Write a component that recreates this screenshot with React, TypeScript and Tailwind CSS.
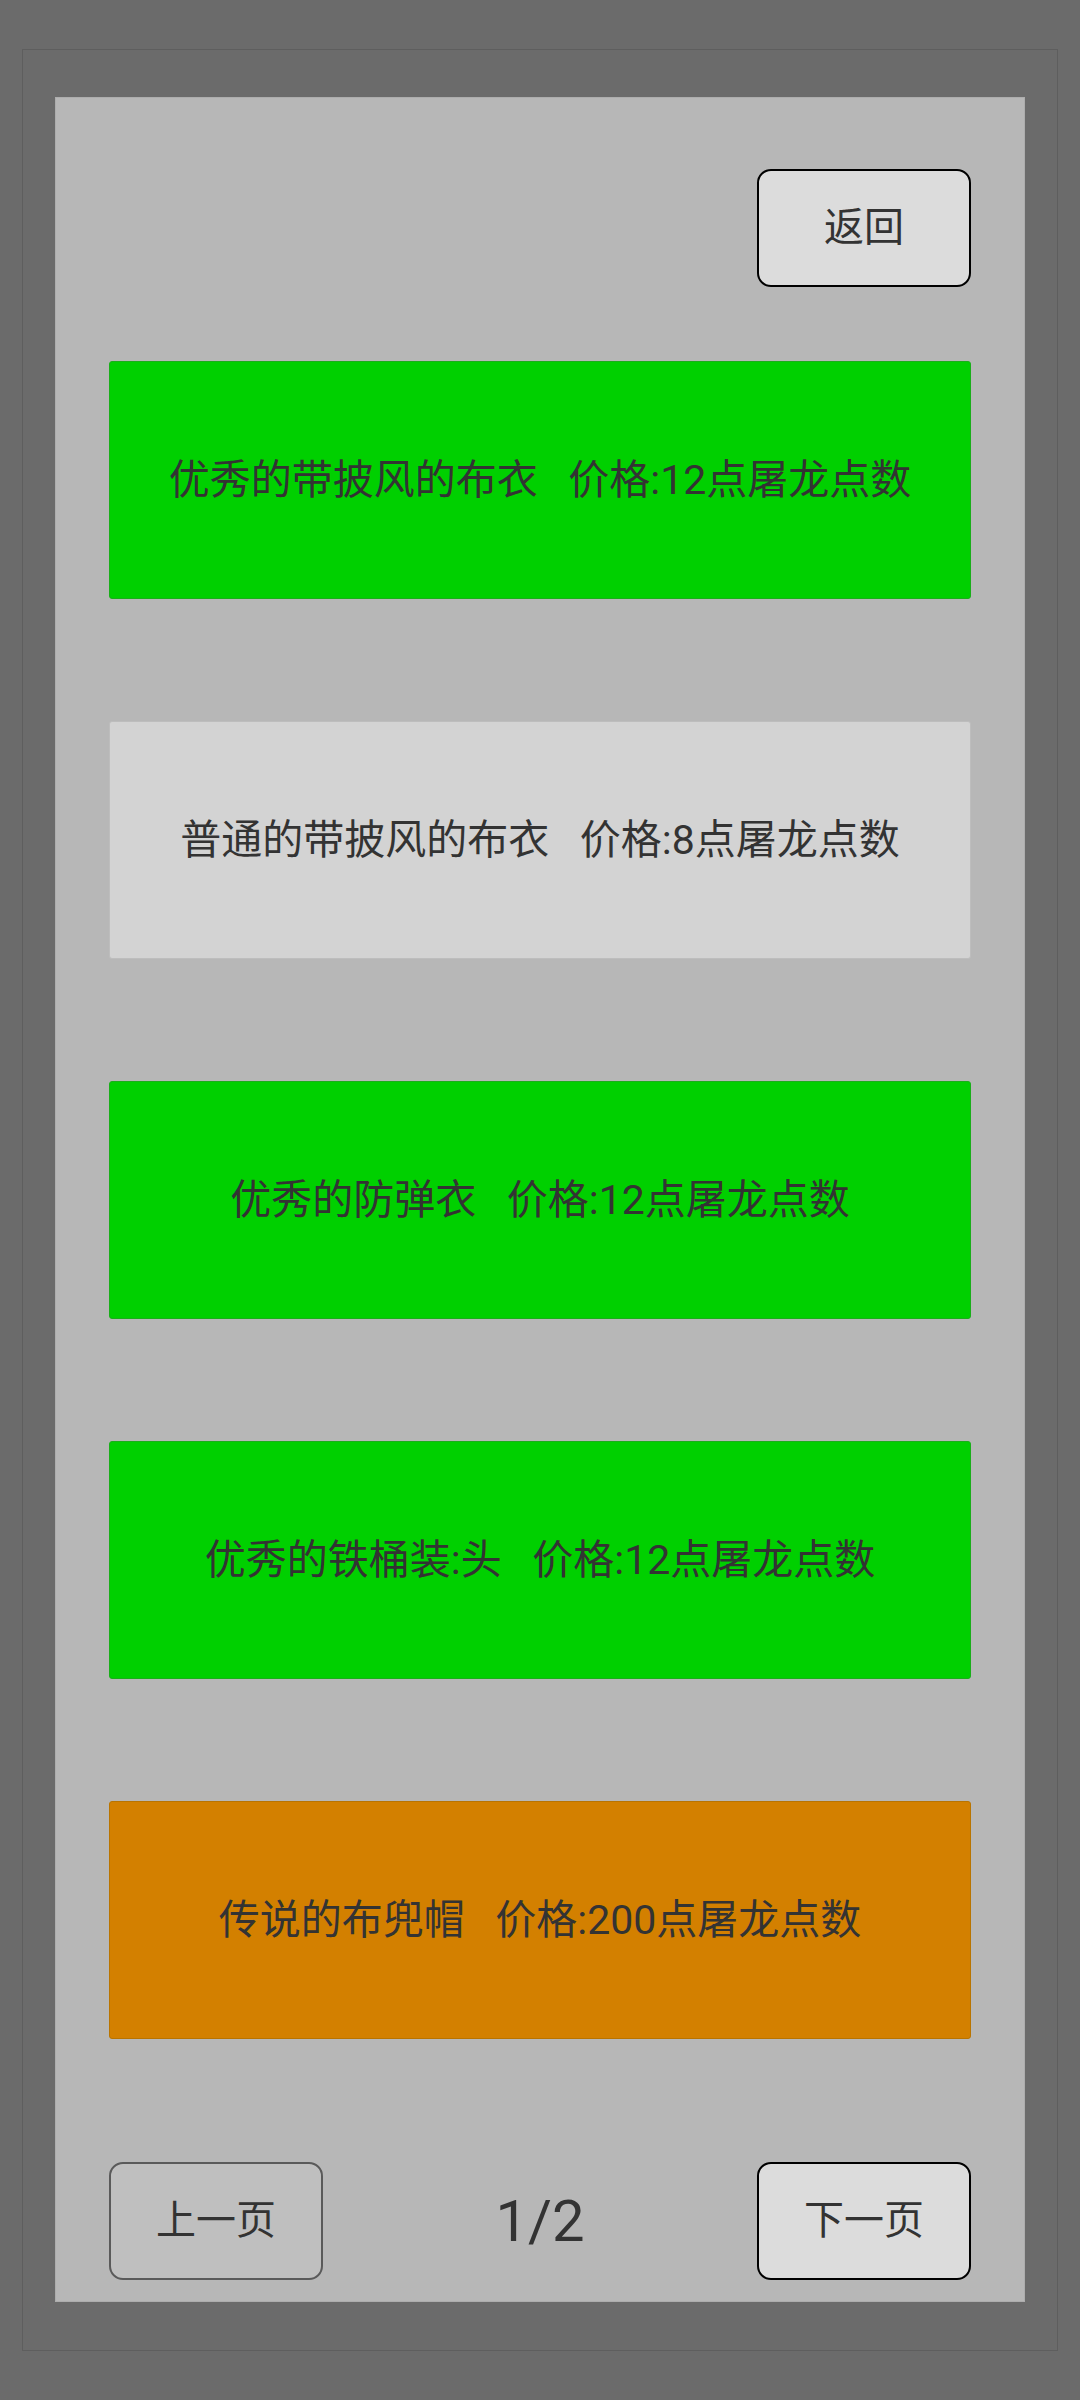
import React from "react";

const items = [
  { name: "优秀的带披风的布衣", price: 12, cls: "bg-[#00d000] border-[#1aae1a]" },
  { name: "普通的带披风的布衣", price: 8, cls: "bg-[#d3d3d3] border-[#bdbdbd]" },
  { name: "优秀的防弹衣", price: 12, cls: "bg-[#00d000] border-[#1aae1a]" },
  { name: "优秀的铁桶装:头", price: 12, cls: "bg-[#00d000] border-[#1aae1a]" },
  { name: "传说的布兜帽", price: 200, cls: "bg-[#d38000] border-[#b97400]" },
];

export default function App() {
  return (
    <div
      className="w-[1080px] h-[2400px] bg-[#6b6b6b] pt-[49px] px-[22px] text-[#333333]"
      style={{ fontFamily: '"Roboto", "Noto Sans CJK SC", sans-serif' }}
    >
      <div className="h-[2302px] border border-[#5e5e5e] px-[32px] pt-[47px]">
        <div className="h-[2205px] bg-[#b7b7b7] border border-[#adadad] flex flex-col px-[53px] pt-[71px]">
          <div className="flex justify-end">
            <button className="w-[214px] h-[118px] rounded-[14px] border-2 border-black bg-[#dcdcdc] text-[40px] leading-none text-[#333]">
              返回
            </button>
          </div>
          <div className="flex flex-col gap-[122px] mt-[74px]">
            {items.map((it, i) => (
              <div
                key={i}
                className={`h-[238px] rounded-[3px] border flex items-center justify-center text-[41px] leading-none whitespace-pre ${it.cls}`}
              >
                {`${it.name}   价格:${it.price}点屠龙点数`}
              </div>
            ))}
          </div>
          <div className="flex items-center justify-between mt-[123px]">
            <button className="w-[214px] h-[118px] rounded-[14px] border-2 border-[#5a5a5a] bg-[#bfbfbf] text-[40px] leading-none text-[#333]">
              上一页
            </button>
            <div className="text-[58px] leading-none text-[#333]">1/2</div>
            <button className="w-[214px] h-[118px] rounded-[14px] border-2 border-black bg-[#dcdcdc] text-[40px] leading-none text-[#333]">
              下一页
            </button>
          </div>
        </div>
      </div>
    </div>
  );
}
